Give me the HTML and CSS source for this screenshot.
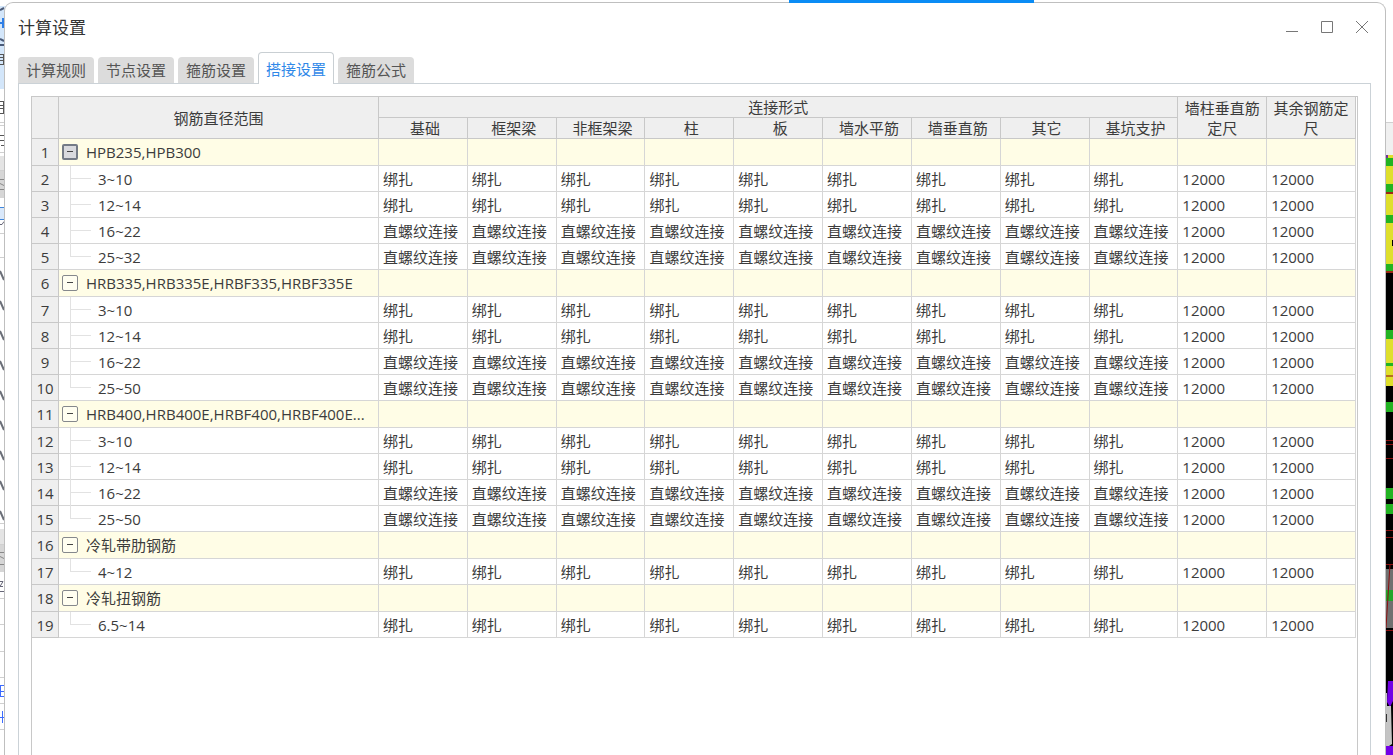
FILE: index.html
```html
<!DOCTYPE html>
<html lang="zh-CN">
<head>
<meta charset="utf-8">
<title>计算设置</title>
<link rel="stylesheet" href="styles.css">
</head>
<body>
<div class="backdrop" aria-hidden="true">
  <svg class="edge edge-left" width="16" height="755" viewBox="0 0 16 755">
    <path fill="#d3e6fa" d="M0 6h16v83H0z"/>
    <path fill="none" stroke="#4a5a78" stroke-width="2" d="M0 10l4-2M0 39l4 2M0 45h4"/>
    <path stroke="#2f7fe6" stroke-width="2" d="M0 23h4M3 18v10"/>
    <path stroke="#555" d="M0 54.500h4M0 57.500h4M0 60.500h4M0 64.500h4M3.500 54v11M0 101.500h4M0 105.500h4M0 108.500h4M0 113.500h4M3.500 101v13M0 135.500h4M0 140.500h4M1 145.500h3"/>
    <path fill="#e4e4e4" d="M0 156h16v42H0zM0 529h16v43H0z"/>
    <path fill="#d6d6d6" d="M0 171h16v27H0zM0 545h16v27H0z"/>
    <path stroke="#d0d0d0" d="M0 122.500h4M0 125.500h4M0 152.500h4M0 170.500h4M0 233.500h4M0 257.500h4M0 523.500h4M0 544.500h4M0 598.500h4M0 624.500h4M0 651.500h4M0 677.500h4M0 703.500h4M0 729.500h4"/>
    <path stroke="#888" d="M0 179.500h4M0 183.500l4 2M0 189.500h4M0 552.500h4M0 556.500l4 2M0 564.500h4"/>
    <path fill="#d9e8fa" stroke="#3f86dc" d="M-1 207.500h6v12h-6z"/>
    <path fill="none" stroke="#667" d="M0 224.500h2l2-3M0 581.500h3l-3 5h3M0 591.500h4"/>
    <path stroke="#6b6f78" stroke-width="2" d="M0 271l4 9M0 301l4 9M0 331l4 9M0 361l4 9M0 391l4 9M0 421l4 9M0 451l4 9M0 481l4 9M0 511l4 9"/>
    <path fill="none" stroke="#3d6cff" d="M4 685.500H0M4 691.500H0M4 696.500H0M0.500 685v12M0 717.500h4M2.500 711v12"/>
  </svg>
  <span class="top-accent"></span>
  <svg class="edge edge-right" width="16" height="755" viewBox="0 0 16 755">
    <path fill="#f0f0f0" d="M0 123h16v32H0z"/>
    <path stroke="#d0d0d0" d="M0 122.500h16"/>
    <path fill="#000" d="M0 155h16v600H0z"/>
    <path fill="#dfdf2c" d="M8 155h8v109H8zM8 339h8v47H8z"/>
    <path fill="#71309a" d="M8 155h3v4H8zM8 167h1v17H8zM8 196h1v16H8z"/>
    <path fill="#22b322" d="M8 158h8v8H8zM8 184h8v8H8zM8 215h8v8H8zM8 264h8v7H8zM8 330h8v9H8zM8 363h8v3H8zM8 402h8v10H8zM8 488h8v11H8zM8 504h8v10H8z"/>
    <path stroke="#9c2a12" stroke-width="2" d="M8 193h8M8 272h8"/>
    <path stroke="#b5701d" stroke-width="2" d="M8 376h8"/>
    <path fill="#000" d="M15 240h1v6h-1z"/>
    <path fill="#707070" d="M8 569h8v59H8z"/>
    <path fill="#22a52a" d="M8 590h8v11H8z"/>
    <path fill="none" stroke="#8b1010" d="M8 440.500h8M8 444.500h8M8 458.500h8M8 530.500h8M8 537.500h8M8 564.500h8M8 630.500h8M13 564l-4 64"/>
    <path fill="#7200e6" d="M11 681h5v20l-3 6-3-5zM8 746h8v9H8z"/>
    <path fill="#c4c4c4" d="M8 693h2v13h4l1 38-3 2H8z"/>
    <path fill="#333" d="M8 714h2v8H8z"/>
  </svg>
</div>

<main class="dialog">
  <header class="titlebar">
    <h1 class="title">计算设置</h1>
    <div class="window-buttons">
      <button class="window-button" type="button" aria-label="最小化"><svg width="16" height="16" viewBox="0 0 16 16"><path d="M2 12.500h12"/></svg></button>
      <button class="window-button" type="button" aria-label="最大化"><svg width="16" height="16" viewBox="0 0 16 16"><path d="M2.500 2.500h11v11h-11z"/></svg></button>
      <button class="window-button" type="button" aria-label="关闭"><svg width="16" height="16" viewBox="0 0 16 16"><path d="M2 2l12 12M14 2L2 14"/></svg></button>
    </div>
  </header>

  <nav class="tabs" role="tablist">
    <button class="tab" type="button" role="tab">计算规则</button>
    <button class="tab" type="button" role="tab">节点设置</button>
    <button class="tab" type="button" role="tab">箍筋设置</button>
    <button class="tab tab-active" type="button" role="tab" aria-selected="true">搭接设置</button>
    <button class="tab" type="button" role="tab">箍筋公式</button>
  </nav>

  <section class="panel">
    <div class="grid-frame">
      <table class="grid">
        <colgroup>
          <col class="col-number">
          <col class="col-range">
          <col span="11">
        </colgroup>
        <thead>
          <tr>
            <th rowspan="2"></th>
            <th rowspan="2">钢筋直径范围</th>
            <th colspan="9">连接形式</th>
            <th rowspan="2">墙柱垂直筋定尺</th>
            <th rowspan="2">其余钢筋定尺</th>
          </tr>
          <tr class="subheads">
            <th>基础</th>
            <th>框架梁</th>
            <th>非框架梁</th>
            <th>柱</th>
            <th>板</th>
            <th>墙水平筋</th>
            <th>墙垂直筋</th>
            <th>其它</th>
            <th>基坑支护</th>
          </tr>
        </thead>
        <tbody id="rows"></tbody>
      </table>
    </div>
  </section>
</main>
<script src="grid.js"></script>
</body>
</html>
```
FILE: styles.css
```css
* {
  box-sizing: border-box;
}

body {
  margin: 0;
  height: 100vh;
  overflow: hidden;
  background: #fff;
  color: #3c3c3c;
  font-family: "Open Sans", "Noto Sans CJK SC", sans-serif;
  font-size: 15px;
}

body::before {
  content: "";
  display: block;
  height: 2px;
}

button {
  margin: 0;
  padding: 0;
  border: 0;
  background: none;
  color: inherit;
  font: inherit;
}

/* Application window showing behind the dialog */
.backdrop {
  position: absolute;
  inset: 0;
}

.edge {
  position: absolute;
  top: 0;
}

.edge-left {
  left: 0;
}

.edge-right {
  right: 0;
}

.top-accent {
  position: absolute;
  z-index: 2;
  top: 0;
  left: 789px;
  width: 245px;
  height: 3px;
  background: #0a8cf5;
}

.dialog {
  position: relative;
  display: flex;
  flex-direction: column;
  height: 100%;
  margin: 0 7px 0 4px;
  padding: 0 14px 0 13px;
  border: 1px solid #bfbfbf;
  border-bottom: 0;
  border-radius: 9px 9px 0 0;
  background: #fff;
}

.titlebar {
  display: flex;
  align-items: center;
  justify-content: space-between;
  height: 49px;
  padding: 0 1px 2px 0;
}

.title {
  margin: 0;
  color: #333;
  font-size: 17px;
  font-weight: 400;
}

.window-buttons {
  display: flex;
  gap: 19px;
}

.window-button {
  display: flex;
  width: 16px;
  height: 16px;
}

.window-button svg {
  fill: none;
  stroke: #777;
  stroke-width: 1;
}

.tabs {
  position: relative;
  z-index: 1;
  display: flex;
  align-items: flex-end;
  gap: 4px;
  height: 32px;
  margin-bottom: -1px;
}

.tab {
  width: 76px;
  height: 26px;
  margin-bottom: 1px;
  border-radius: 4px 4px 0 0;
  background: #dcdcdc;
  color: #555;
  line-height: 26px;
  white-space: nowrap;
}

.tab-active {
  height: 32px;
  margin-bottom: 0;
  border: 1px solid #c9cfd3;
  border-bottom: 0;
  background: #fff;
  color: #2f88e8;
  line-height: 32px;
}

.panel {
  display: flex;
  flex: 1;
  padding: 12px 12px 0;
  border: 1px solid #cbd2d7;
  border-bottom: 0;
}

.grid-frame {
  flex: 1;
  padding-right: 1px;
  border: 1px solid #c8c8c8;
  border-bottom: 0;
}

.grid {
  width: 100%;
  border-collapse: separate;
  border-spacing: 0;
  table-layout: fixed;
}

.col-number {
  width: 27px;
}

.col-range {
  width: 320px;
}

.grid th,
.grid td {
  height: 26px;
  padding: 0 0 0 4px;
  border-right: 1px solid #d6d6d6;
  border-bottom: 1px solid #d6d6d6;
  font-weight: 400;
  line-height: 20px;
  text-align: left;
  white-space: nowrap;
}

.grid thead th {
  height: 21px;
  padding: 0;
  border-color: #c8c8c8;
  background: #efefef;
  text-align: center;
  white-space: normal;
}

.grid .subheads th {
  padding-left: 4px;
}

.grid .row-number {
  padding: 0;
  border-color: #c8c8c8;
  background: #efefef;
  text-align: center;
}

.grid .group td {
  height: 27px;
  background: #fffde6;
}

.grid .group-name {
  padding-left: 3px;
}

.group-label {
  display: flex;
  align-items: center;
  gap: 8px;
}

.toggle {
  display: flex;
  flex: none;
  width: 16px;
  height: 16px;
  border: 1px solid #85888c;
  border-radius: 2px;
  background: #fffef0;
}

.toggle svg {
  stroke: #444;
}

.toggle-current {
  border: 2px solid #747b86;
  background: #d9dade;
}

.toggle-current svg {
  margin: -1px;
}

.grid .branch {
  position: relative;
  padding-left: 39px;
}

.branch::before {
  content: "";
  position: absolute;
  top: 0;
  bottom: -1px;
  left: 11px;
  border-left: 1px solid #e2e2e2;
}

.branch-last::before {
  bottom: 13px;
}

.branch::after {
  content: "";
  position: absolute;
  top: 12px;
  left: 11px;
  width: 21px;
  border-top: 1px solid #e2e2e2;
}
```
FILE: grid.js
```js
const TIE = "绑扎";
const THREAD = "直螺纹连接";
const STOCK_LENGTH = "12000";
const CONNECTION_COLUMNS = 9;

const groups = [
  { name: "HPB235,HPB300", current: true,
    rows: [["3~10", TIE], ["12~14", TIE], ["16~22", THREAD], ["25~32", THREAD]] },
  { name: "HRB335,HRB335E,HRBF335,HRBF335E",
    rows: [["3~10", TIE], ["12~14", TIE], ["16~22", THREAD], ["25~50", THREAD]] },
  { name: "HRB400,HRB400E,HRBF400,HRBF400E...",
    rows: [["3~10", TIE], ["12~14", TIE], ["16~22", THREAD], ["25~50", THREAD]] },
  { name: "冷轧带肋钢筋", rows: [["4~12", TIE]] },
  { name: "冷轧扭钢筋", rows: [["6.5~14", TIE]] }
];

let number = 0;
let html = "";

for (const group of groups) {
  number += 1;
  const toggleClass = group.current ? "toggle toggle-current" : "toggle";
  html += `<tr class="group"><th class="row-number" scope="row">${number}</th>
    <td class="group-name"><div class="group-label">
      <button class="${toggleClass}" type="button" aria-expanded="true" aria-label="${group.name}"><svg width="14" height="14" viewBox="0 0 14 14"><path d="M4 6.500h6"/></svg></button>
      <span>${group.name}</span></div></td>
    ${"<td></td>".repeat(CONNECTION_COLUMNS + 2)}</tr>`;

  group.rows.forEach(([range, connection], index) => {
    number += 1;
    const last = index === group.rows.length - 1 ? " branch-last" : "";
    html += `<tr><th class="row-number" scope="row">${number}</th>
      <td class="branch${last}">${range}</td>
      ${`<td>${connection}</td>`.repeat(CONNECTION_COLUMNS)}
      ${`<td>${STOCK_LENGTH}</td>`.repeat(2)}</tr>`;
  });
}

document.getElementById("rows").innerHTML = html;
```
